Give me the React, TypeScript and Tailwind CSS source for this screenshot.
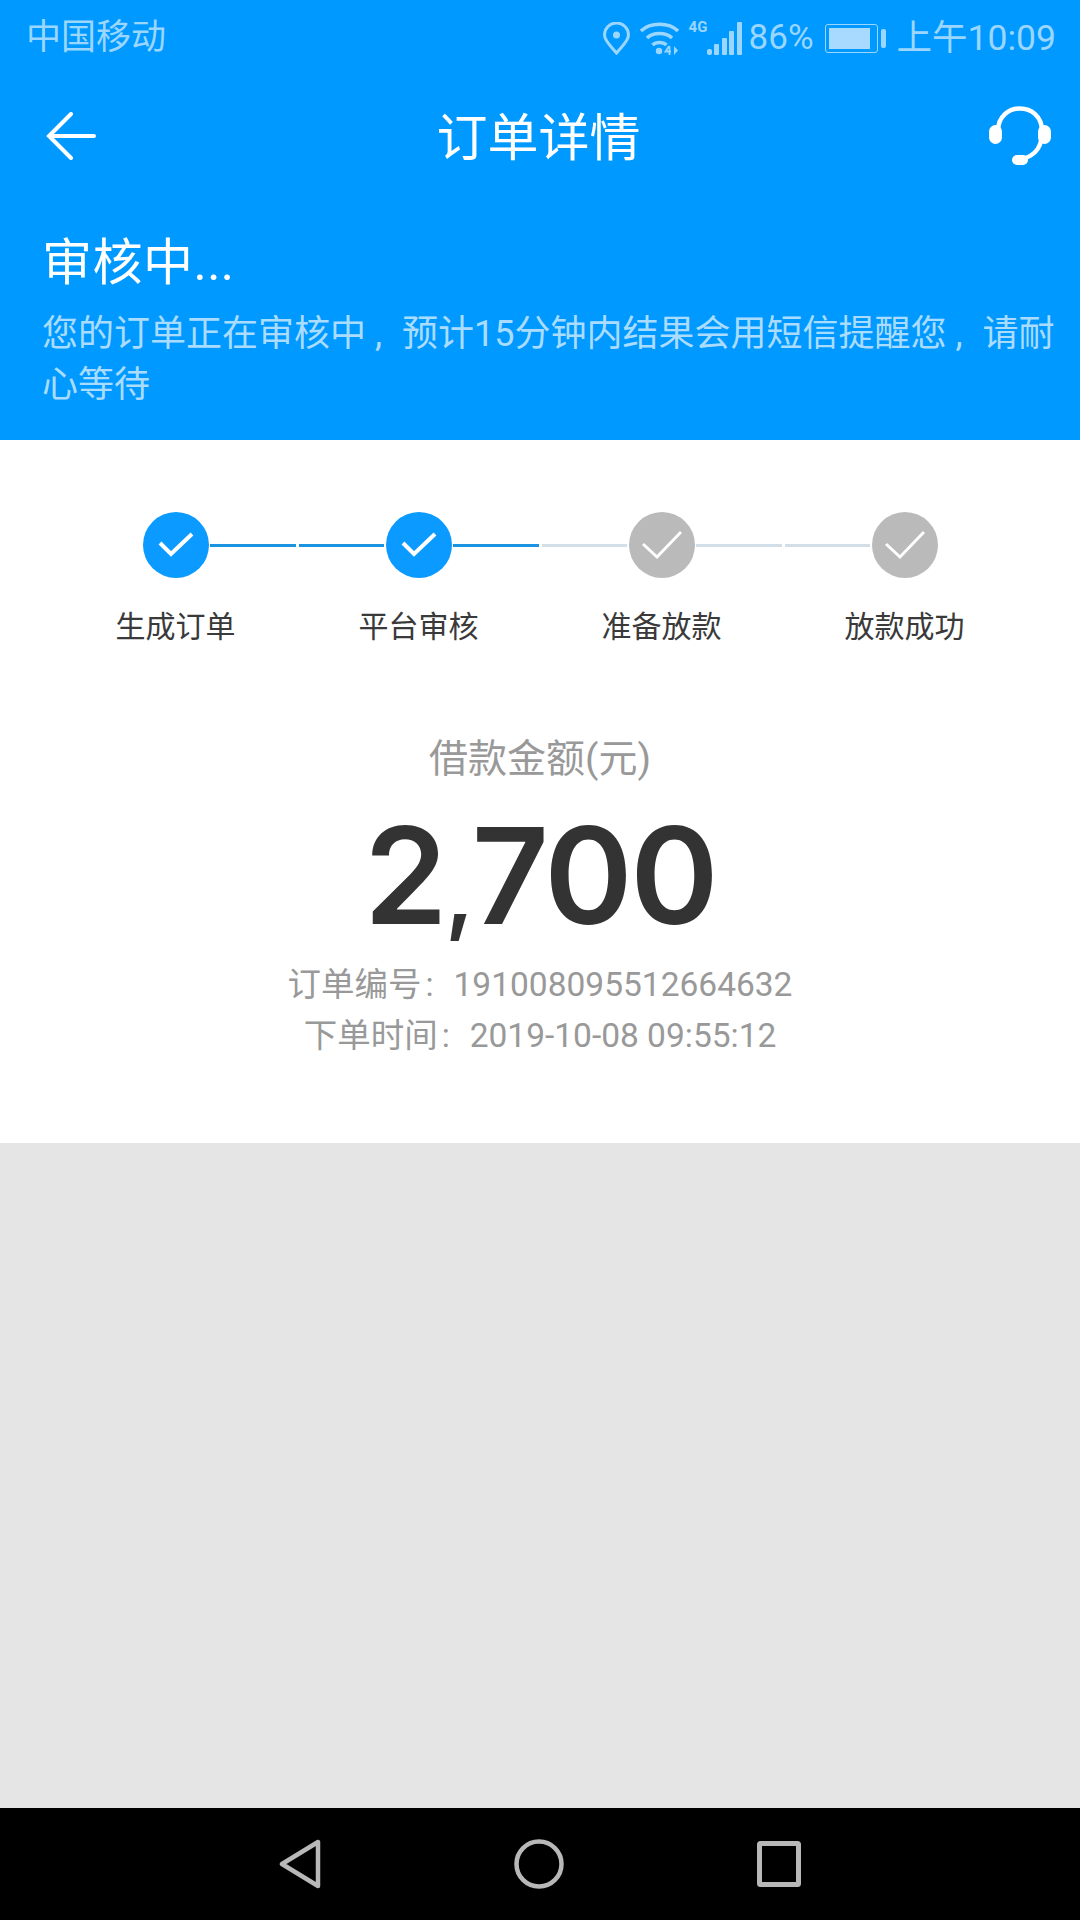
import React from 'react';

const FONT = "font-['Roboto','Noto_Sans_CJK_SC',sans-serif]";

const STEPS = [
  { label: '生成订单', done: true, left: false, right: true },
  { label: '平台审核', done: true, left: true, right: true },
  { label: '准备放款', done: false, left: false, right: false },
  { label: '放款成功', done: false, left: false, right: false },
];

const Step = ({ label, done, left, right, first, last }: { label: string; done: boolean; left: boolean; right: boolean; first: boolean; last: boolean }) => (
  <div className="flex w-[243px] flex-col items-center">
    <div className="flex w-full items-center">
      <div className={`mx-[1.5px] h-[3px] flex-1 ${first ? 'bg-transparent' : left ? 'bg-[#1a93e0]' : 'bg-[#d3dfe8]'}`} />
      <div className={`flex h-[66px] w-[66px] items-center justify-center rounded-full ${done ? 'bg-[#0b9aff]' : 'bg-[#bababa]'}`}>
        {done ? (
          <svg width="36" height="26" viewBox="0 0 36 26" fill="none" stroke="#fff" strokeWidth="4">
            <path d="M2 11 L13 22 L34 2" />
          </svg>
        ) : (
          <svg width="40" height="30" viewBox="0 0 40 30" fill="none" stroke="#fff" strokeWidth="3">
            <path d="M1 14 L15 27 L39 2" />
          </svg>
        )}
      </div>
      <div className={`mx-[1.5px] h-[3px] flex-1 ${last ? 'bg-transparent' : right ? 'bg-[#1a93e0]' : 'bg-[#d3dfe8]'}`} />
    </div>
    <div className="mt-[29px] text-[30px] leading-[40px] text-[#3a3a3a]">{label}</div>
  </div>
);

const StatusIcons = () => (
  <div className="flex items-center text-[#9bd6ff]">
    {/* location pin */}
    <svg width="27" height="33" viewBox="0 0 27 33" fill="none" stroke="currentColor" strokeWidth="3">
      <path d="M13.5 31 C8 24 1.5 19 1.5 13 A12 12 0 0 1 25.5 13 C25.5 19 19 24 13.5 31 Z" />
      <circle cx="13.5" cy="13" r="3.5" fill="currentColor" stroke="none" />
    </svg>
    {/* wifi */}
    <svg className="ml-[10px]" width="39" height="33" viewBox="0 0 39 33" fill="none" stroke="currentColor" strokeWidth="3.5">
      <path d="M1 9 C10 0 29 0 38 9" />
      <path d="M7 16 C13 10 26 10 32 16" />
      <path d="M12.5 23 C16 19.5 23 19.5 26.5 23" />
      <circle cx="19" cy="29" r="3.2" fill="currentColor" stroke="none" />
      <path d="M29 24 L25.5 29.5 L31 29.5 M29.5 24 L29.5 33" strokeWidth="1.8" />
      <path d="M34 24 L34 33 L38 28.5 Z" fill="currentColor" stroke="none" />
    </svg>
    {/* 4G + signal */}
    <div className="relative ml-[10px] h-[33px] w-[53px]">
      <span className="absolute left-0 top-[-3px] text-[15px] leading-[16px] font-bold font-['Roboto']">4G</span>
      <div className="absolute bottom-0 right-0 flex items-end gap-[2.5px]">
        <div className="h-[6px] w-[5px] rounded-[2px] bg-current" />
        <div className="h-[11px] w-[5px] rounded-[1px] bg-current" />
        <div className="h-[17px] w-[5px] rounded-[1px] bg-current" />
        <div className="h-[24px] w-[5px] rounded-[1px] bg-current" />
        <div className="h-[33px] w-[5px] rounded-[1px] bg-current" />
      </div>
    </div>
    <span className="ml-[7px] text-[35px] leading-[40px]">86%</span>
    {/* battery */}
    <div className="ml-[11px] flex items-center">
      <div className="flex h-[29px] w-[53px] items-center rounded-[3px] border border-current p-[3px]">
        <div className="h-full w-[41px] bg-[#a8d9ff]" />
      </div>
      <div className="ml-[3px] h-[19px] w-[5px] rounded-[2px] bg-current" />
    </div>
    <span className="ml-[11px] text-[35.5px] leading-[40px]">上午10:09</span>
  </div>
);

export default function App() {
  return (
    <div className={`flex h-[1920px] w-[1080px] flex-col bg-[#e5e5e5] ${FONT}`}>
      {/* Blue header */}
      <header className="h-[440px] bg-[#0099ff] text-white">
        <div className="flex h-[72px] items-center justify-between pl-[26px] pr-[24px] pt-[4px]">
          <span className="text-[35px] leading-[40px] text-[#9bd6ff]">中国移动</span>
          <StatusIcons />
        </div>
        <div className="flex h-[128px] items-center justify-between pl-[46px] pr-[29px]">
          <svg width="52" height="48" viewBox="0 0 52 48" fill="none" stroke="#fff" strokeWidth="4" strokeLinecap="round">
            <path d="M25 2 L3 24 L25 46 M3 24 H48" />
          </svg>
          <h1 className="mr-[10px] pt-[5px] text-[51px] leading-[60px] font-normal">订单详情</h1>
          <svg width="62" height="62" viewBox="0 0 62 62" fill="none" stroke="#fff">
            <path d="M9 26 C9 -4 53 -4 53 26 C53 40 49 50 31 55" strokeWidth="4.5" />
            <rect x="0" y="20" width="13" height="19" rx="6.5" fill="#fff" stroke="none" />
            <rect x="49" y="20" width="13" height="19" rx="6.5" fill="#fff" stroke="none" />
            <rect x="23" y="50" width="16" height="10" rx="5" fill="#fff" stroke="none" />
          </svg>
        </div>
        <div className="pl-[42px] pr-[20px] pt-[33px]">
          <div className="text-[50px] leading-[60px] tracking-[0.5px]">审核中...</div>
          <p className="mt-[16px] text-[36px] leading-[51px] text-[#aadcff]">
            您的订单正在审核中<span className="inline-block w-[36px] pl-[9px]">,</span>预计15分钟内结果会用短信提醒您<span className="inline-block w-[36px] pl-[9px]">,</span>请耐<br />心等待
          </p>
        </div>
      </header>

      {/* Progress and amount */}
      <main className="flex h-[703px] flex-col items-center bg-white pt-[72px]">
        <div className="flex">
          {STEPS.map((s, i) => (
            <Step key={s.label} {...s} first={i === 0} last={i === STEPS.length - 1} />
          ))}
        </div>
        <div className="mt-[87px] text-[39px] leading-[50px] text-[#999]">借款金额(元)</div>
        <div className="mt-[16px] font-['Inter'] text-[134px] leading-[150px] font-semibold tracking-[-2.5px] text-[#333]">
          2<span className="text-[92px] leading-none">,</span>700
        </div>
        <div className="mt-[9px] text-[33.5px] leading-[51px] text-[#999]">
          订单编号<span className="inline-block w-[32px] pl-[4px]">:</span>191008095512664632
        </div>
        <div className="text-[33.5px] leading-[51px] text-[#999]">
          下单时间<span className="inline-block w-[32px] pl-[4px]">:</span>2019-10-08 09:55:12
        </div>
      </main>

      <div className="flex-1" />

      {/* Android nav bar */}
      <nav className="flex h-[112px] items-center justify-center gap-[193px] bg-black">
        <svg width="42" height="50" viewBox="0 0 42 50" fill="none" stroke="#b8b8b8" strokeWidth="4.5" strokeLinejoin="round">
          <path d="M39 3 V47 L3 25 Z" />
        </svg>
        <svg width="50" height="50" viewBox="0 0 50 50" fill="none" stroke="#b8b8b8" strokeWidth="4.5">
          <circle cx="25" cy="25" r="22.5" />
        </svg>
        <svg width="44" height="46" viewBox="0 0 44 46" fill="none" stroke="#b8b8b8" strokeWidth="5" strokeLinejoin="round">
          <rect x="2.5" y="2.5" width="39" height="41" rx="1" />
        </svg>
      </nav>
    </div>
  );
}
